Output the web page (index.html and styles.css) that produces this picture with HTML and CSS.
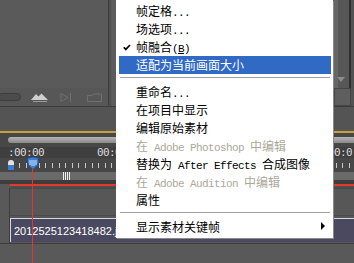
FILE: index.html
```html
<!DOCTYPE html>
<html lang="zh-CN">
<head>
    <meta charset="UTF-8">
    <title>Premiere - 素材右键菜单</title>
    <link rel="stylesheet" href="styles.css">
</head>
<body>

<div class="app">
    <!-- upper panels -->
    <div class="top">
        <div class="monitor">
            <div class="monitor-view"></div>
            <div class="monitor-bar">
                <span class="field"></span>
                <svg class="icon zoom" width="18" height="9" viewBox="0 0 18 9">
                    <path d="M0 7 L5 1 L7.5 3.5 L10.5 0.5 L17 7 Z" fill="#cfcfcf"/>
                    <path d="M2 8.5 H16" stroke="#9a9a9a" stroke-width="1"/>
                </svg>
                <svg class="icon dim" width="15" height="9" viewBox="0 0 15 9">
                    <path d="M2 0.5 L9 4.5 L2 8.5 Z" fill="none" stroke="#707070"/>
                    <path d="M11.5 0 V9" stroke="#707070"/>
                </svg>
                <svg class="icon dim" width="15" height="9" viewBox="0 0 15 9">
                    <path d="M0.5 2.5 H5 L6 1 H14.5 V8.5 H0.5 Z" fill="none" stroke="#707070"/>
                </svg>
            </div>
        </div>
        <div class="splitter"></div>
        <div class="panel"></div>
        <div class="side">
            <span class="side-arrow"></span>
            <span class="side-box"></span>
        </div>
    </div>

    <!-- timeline -->
    <div class="timeline">
        <div class="tl-head"></div>
        <div class="tl-gold"></div>
        <div class="tl-scroll"><span class="thumb"></span></div>
        <div class="tl-time">
            <span>:00:00</span>
            <span class="t2">00:00</span>
            <span class="t3">00:0</span>
        </div>
        <div class="tl-ruler"></div>
        <div class="tl-work"><span class="grip"></span></div>
        <div class="tl-render"></div>
        <div class="track"></div>
        <div class="track clip-track">
            <div class="clip">2012525123418482.jpg</div>
        </div>
        <div class="tl-bottom"></div>
    </div>

    <!-- playhead over the timeline -->
    <div class="inpoint"></div>
    <div class="playhead">
        <svg width="12" height="13" viewBox="0 0 12 13">
            <path d="M0.5 1 Q6 -1 11.5 1 V6 Q11 9 6 12.5 Q1 9 0.5 6 Z" fill="#3f7fd0" stroke="#1d4f96"/>
            <path d="M3 3 V8 M5 3 V9 M7 3 V9 M9 3 V8" stroke="#cfe3ff" stroke-width="1"/>
        </svg>
    </div>
    <div class="cti-line"></div>

    <!-- context menu -->
    <div class="menu">
        <div class="item">帧定格<span class="en">...</span></div>
        <div class="item">场选项<span class="en">...</span></div>
        <div class="item">
            <svg class="check" width="8" height="7" viewBox="0 0 8 7">
                <path d="M0.8 3.2 L2.8 5.4 L7 1" fill="none" stroke="#000" stroke-width="1.7"/>
            </svg>
            帧融合<span class="en">(<u>B</u>)</span>
        </div>
        <div class="item on">适配为当前画面大小</div>
        <div class="sep"></div>
        <div class="item">重命名<span class="en">...</span></div>
        <div class="item">在项目中显示</div>
        <div class="item">编辑原始素材</div>
        <div class="item off">在<span class="en"> Adobe Photoshop </span>中编辑</div>
        <div class="item">替换为<span class="en"> After Effects </span>合成图像</div>
        <div class="item off">在<span class="en"> Adobe Audition </span>中编辑</div>
        <div class="item">属性</div>
        <div class="sep"></div>
        <div class="item">显示素材关键帧<span class="sub"></span></div>
    </div>
</div>

</body>
</html>
```

FILE: styles.css
```css
* {
    box-sizing: border-box;
}
body {
    margin: 0;
    background: #3a3a3a;
    font-family: "Liberation Sans", Arial, sans-serif;
}
.app {
    position: relative;
    width: 354px;
    height: 263px;
    overflow: hidden;
    background: #595959;
}

/* upper panels */
.top {
    display: flex;
    height: 106px;
}
.monitor {
    width: 108px;
    display: flex;
    flex-direction: column;
}
.monitor-view {
    height: 88px;
    background: #5a5a5a;
}
.monitor-bar {
    height: 18px;
    display: flex;
    align-items: center;
    background: #575757;
}
.field {
    width: 23px;
    height: 8px;
    margin-left: -2px;
    border: 1px solid #3c3c3c;
    border-radius: 4px;
    background: #4c4c4c;
}
.icon {
    display: block;
}
.zoom {
    margin-left: 10px;
}
.dim {
    margin-left: 10px;
}
.dim + .dim {
    margin-left: 13px;
}
.splitter {
    width: 3px;
    border-left: 1px solid #3e3e3e;
    background: #4f4f4f;
}
.panel {
    flex: 1;
    background: #5c5c5c;
}
.side {
    width: 20px;
    position: relative;
    background: linear-gradient(90deg, #666 0 4px, #575757 4px 15px, #2f2f2f 15px 17px, #525252 17px);
}
.side-arrow {
    position: absolute;
    left: 3px;
    top: 77px;
    border-top: 5px solid #8c8c8c;
    border-left: 4px solid transparent;
    border-right: 4px solid transparent;
}
.side-box {
    position: absolute;
    left: 0;
    top: 88px;
    width: 17px;
    height: 18px;
    border: 1px solid #454545;
    background: #5e5e5e;
}

/* timeline */
.timeline {
    display: flex;
    flex-direction: column;
}
.tl-head {
    height: 25px;
    border-top: 1px solid #3b3b3b;
    background: #545454;
}
.tl-gold {
    height: 2px;
    background: #c9a13c;
}
.tl-scroll {
    height: 14px;
    padding: 4px 0 4px 8px;
    background: #474747;
}
.thumb {
    display: block;
    height: 6px;
    border-radius: 3px 0 0 3px;
    background: linear-gradient(#b4b4b4, #8a8a8a);
}
.tl-time {
    height: 11px;
    position: relative;
    background: #3f3f3f;
    color: #dadada;
    font: 11px/11px "DejaVu Sans Mono", monospace;
    letter-spacing: -0.6px;
}
.tl-time span {
    position: absolute;
    top: 0;
    left: 8px;
}
.tl-time .t2 {
    left: 97px;
}
.tl-time .t3 {
    left: 328px;
}
.tl-ruler {
    height: 14px;
    background:
        repeating-linear-gradient(90deg, #c8c8c8 0 1px, transparent 1px 6.6px) 19px 5px / 100% 5px no-repeat,
        #474747;
}
.tl-work {
    height: 8px;
    position: relative;
    background: #6a6a6a;
}
.grip {
    position: absolute;
    left: 63px;
    top: 0;
    width: 7px;
    height: 8px;
    background: repeating-linear-gradient(90deg, #eee 0 1px, transparent 1px 2px);
}
.tl-render {
    height: 8px;
    border-top: 4px solid #3d3d3d;
    background: linear-gradient(#e23a2c 0 2px, #4e4e4e 2px);
    background-position: 10px 0;
    background-repeat: no-repeat;
}
.track {
    height: 27px;
    margin-left: 9px;
    border-left: 1px solid #3d3d3d;
    border-top: 1px solid #4a4a4a;
    background: #575757;
}
.clip-track {
    height: 28px;
    padding-top: 2px;
}
.clip {
    height: 24px;
    padding: 6px 0 0 3px;
    border-top: 1px solid #d6d6de;
    border-left: 1px solid #d6d6de;
    background: #4a4960;
    color: #fff;
    font-size: 11px;
    line-height: 12px;
    white-space: nowrap;
}
.tl-bottom {
    flex: 1;
    border-top: 1px solid #3c3c3c;
    background: #494949;
}

/* playhead */
.inpoint {
    position: absolute;
    left: 8px;
    top: 160px;
    width: 6px;
    height: 10px;
    border-radius: 3px 3px 0 0;
    background: linear-gradient(#e2e2e2 0 5px, #3d7cd0 5px);
}
.playhead {
    position: absolute;
    left: 27px;
    top: 157px;
}
.playhead svg {
    display: block;
}
.cti-line {
    position: absolute;
    left: 32px;
    top: 169px;
    width: 1px;
    bottom: 0;
    background: #e0392c;
}

/* context menu */
.menu {
    position: absolute;
    left: 116px;
    top: 0;
    width: 217px;
    padding: 2px 2px 2px 3px;
    background: #fff;
    box-shadow: 1px 1px 0 #8a8a8a;
    color: #000;
    font: 12px "Noto Sans CJK SC", sans-serif;
}
.item {
    position: relative;
    height: 18px;
    line-height: 18px;
    padding-left: 17px;
    white-space: nowrap;
}
.item.on {
    background: #316ac5;
    color: #fff;
}
.item.off {
    color: #aca899;
}
.en {
    font-family: "Liberation Mono", monospace;
    font-size: 11px;
    letter-spacing: -0.6px;
    white-space: pre;
}
.check {
    position: absolute;
    left: 4px;
    top: 6px;
}
.sub {
    position: absolute;
    right: 6px;
    top: 4px;
    border-left: 4px solid #000;
    border-top: 4px solid transparent;
    border-bottom: 4px solid transparent;
}
.sep {
    height: 9px;
    padding: 3px 0 0 1px;
}
.sep::before {
    content: "";
    display: block;
    width: 210px;
    border-top: 1px solid #a0a0a0;
    border-bottom: 1px solid #fff;
}
```
